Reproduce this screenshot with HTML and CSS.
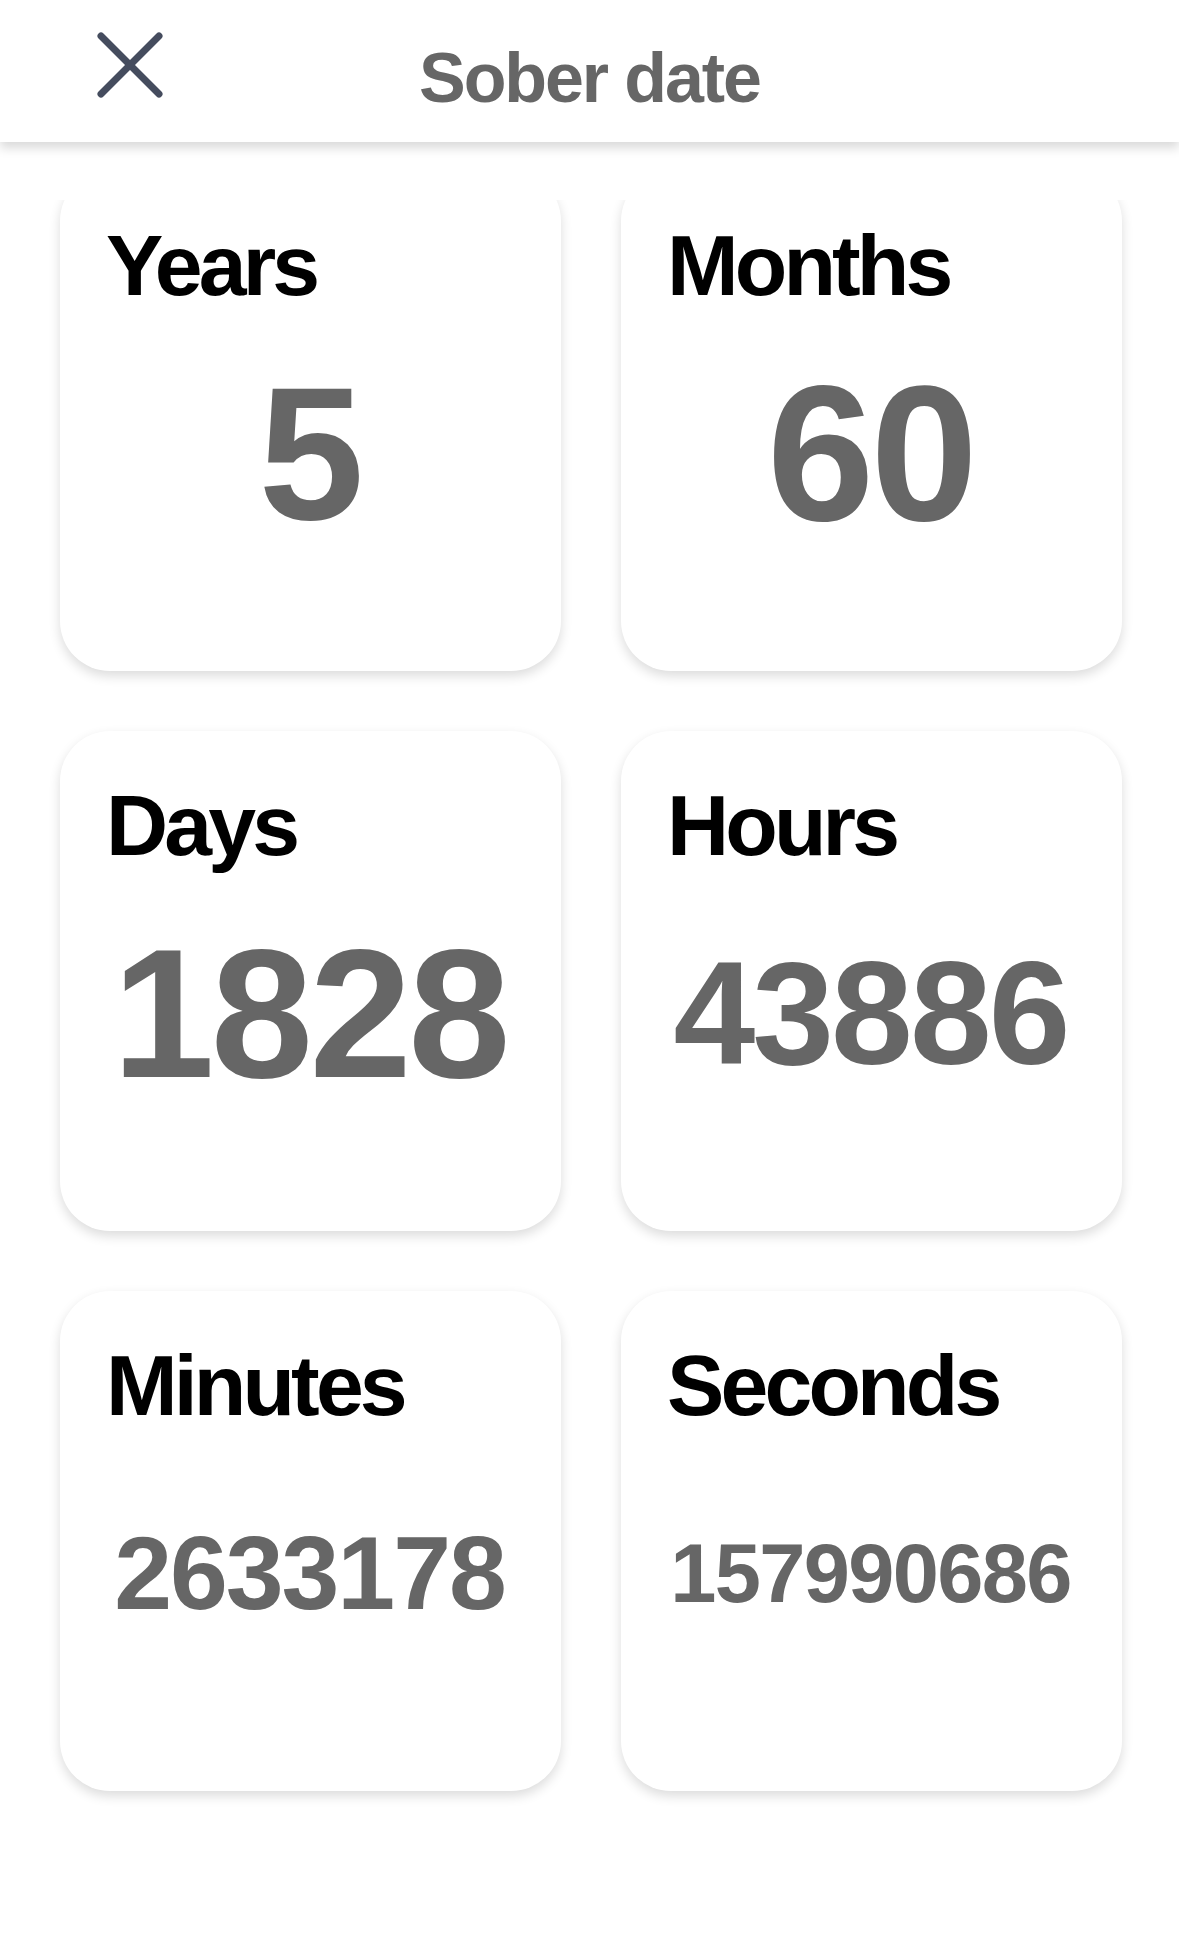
FILE: index.html
```html
<!DOCTYPE html>
<html>
<head>
    <title>Sober date</title>
    <link rel="stylesheet" href="styles.css">
</head>
<body>
    <header class="topbar">
        <button class="close-btn" aria-label="Close">
            <svg width="66" height="66" viewBox="0 0 66 66">
                <line x1="4" y1="4" x2="62" y2="62" />
                <line x1="62" y1="4" x2="4" y2="62" />
            </svg>
        </button>
        <h1 class="title">Sober date</h1>
        <div></div>
    </header>

    <main class="scroller">
        <div class="grid">
            <div class="card">
                <div class="label">Years</div>
                <div class="value-wrap"><span class="value" style="font-size: 190px">5</span></div>
            </div>
            <div class="card">
                <div class="label">Months</div>
                <div class="value-wrap"><span class="value" style="font-size: 193px">60</span></div>
            </div>
            <div class="card">
                <div class="label">Days</div>
                <div class="value-wrap"><span class="value" style="font-size: 184px">1828</span></div>
            </div>
            <div class="card">
                <div class="label">Hours</div>
                <div class="value-wrap"><span class="value" style="font-size: 147px">43886</span></div>
            </div>
            <div class="card">
                <div class="label">Minutes</div>
                <div class="value-wrap"><span class="value" style="font-size: 104px">2633178</span></div>
            </div>
            <div class="card">
                <div class="label">Seconds</div>
                <div class="value-wrap"><span class="value" style="font-size: 83px">157990686</span></div>
            </div>
        </div>
    </main>
</body>
</html>
```

FILE: styles.css
```css
html, body {
    margin: 0;
    padding: 0;
    background-color: #ffffff;
}

body {
    font-family: "Liberation Sans", Arial, Helvetica, sans-serif;
    height: 1951px;
    overflow: hidden;
}

/* top bar */
.topbar {
    position: relative;
    z-index: 1;
    display: grid;
    grid-template-columns: 1fr auto 1fr;
    align-items: start;
    height: 142px;
    background-color: #ffffff;
    box-shadow: 0 6px 10px rgba(0,0,0,0.15);
}

.close-btn {
    justify-self: start;
    width: 66px;
    height: 66px;
    margin: 32px 0 0 97px;
    padding: 0;
    border: none;
    background: none;
    cursor: pointer;
}

.close-btn svg {
    display: block;
}

.close-btn line {
    stroke: #454c5e;
    stroke-width: 7;
    stroke-linecap: round;
}

.title {
    margin: 43px 0 0;
    font-size: 70px;
    line-height: 1;
    font-weight: bold;
    color: #666666;
    letter-spacing: -0.03em;
}

/* counters */
.scroller {
    margin-top: 58px;
    height: 1751px;
    overflow: hidden;
}

.grid {
    display: grid;
    grid-template-columns: 501px 501px;
    column-gap: 60px;
    row-gap: 60px;
    margin-top: -29px;
    padding-left: 60px;
}

.card {
    box-sizing: border-box;
    height: 500px;
    display: flex;
    flex-direction: column;
    padding: 51px 48px 73px 46px;
    background-color: #ffffff;
    border-radius: 50px;
    box-shadow: 0 5px 12px rgba(0,0,0,0.14);
}

.label {
    font-size: 86px;
    line-height: 1;
    font-weight: bold;
    color: #000000;
    letter-spacing: -0.045em;
}

.value-wrap {
    flex: 1;
    display: flex;
    align-items: center;
    justify-content: center;
}

.value {
    line-height: 1;
    font-weight: bold;
    color: #666666;
    letter-spacing: -0.02em;
}
```
